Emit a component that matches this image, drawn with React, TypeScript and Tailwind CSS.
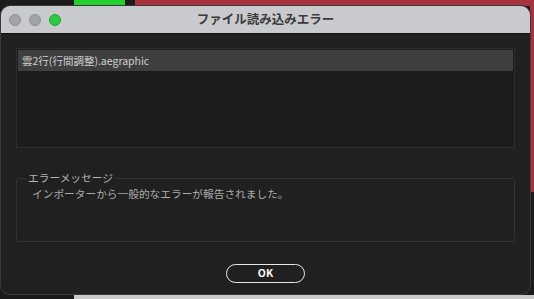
import React from "react";

const jp = { fontFamily: '"Noto Sans CJK JP", "Noto Sans", sans-serif' };

function TrafficLight({ color }: { color: string }) {
  return <span className={`block h-3 w-3 rounded-full border ${color}`} />;
}

export default function App() {
  return (
    <main className="relative h-[299px] w-[534px] overflow-hidden bg-[#1b1b1b]" style={jp}>
      {/* desktop behind the dialog */}
      <div className="absolute left-[74px] top-0 h-[6px] w-[51px] bg-[#22d12e]" />
      <div className="absolute left-[135px] top-0 h-[6px] w-[399px] bg-[#a8333c]" />
      <div className="absolute right-0 top-0 h-[192px] w-[4px] bg-[#a8333c]" />
      <div className="absolute bottom-0 left-[74px] h-[4px] w-[460px] bg-[#c9c9cb]" />

      <section className="relative mt-[5px] flex h-[290px] w-[531px] flex-col overflow-hidden rounded-[10px] border border-[#3a3a3a] bg-[#202020]">
        <header className="relative flex h-[28px] shrink-0 items-center border-b border-[#111] bg-[#c9cacd] px-[8px]">
          <div className="flex gap-[8px]">
            <TrafficLight color="bg-[#a4a4a8] border-[#8e8e92]" />
            <TrafficLight color="bg-[#a4a4a8] border-[#8e8e92]" />
            <TrafficLight color="bg-[#2bc840] border-[#1fa830]" />
          </div>
          <h1 className="absolute inset-x-0 text-center text-[12.5px] font-bold text-[#3b3b3b]">
            ファイル読み込みエラー
          </h1>
        </header>

        <div className="flex flex-1 flex-col px-[15px]">
          <div className="mt-[14px] h-[100px] border border-[#2e2e2e] bg-[#1c1c1c] p-px">
            <div className="flex h-[21px] items-center bg-[#3f3f3f] px-[4px] text-[10.5px] text-[#cfcfcf]">
              雲2行(行間調整).aegraphic
            </div>
          </div>

          <fieldset className="mt-[22px] h-[72px] rounded-[3px] border border-[#333] px-[15px]">
            <legend className="ml-[-6px] px-[2px] text-[10.7px] leading-[16px] text-[#b4b4b4]">
              エラーメッセージ
            </legend>
            <p className="text-[10.7px] leading-[16px] text-[#ababab]">
              インポーターから一般的なエラーが報告されました。
            </p>
          </fieldset>

          <div className="mt-[22px] flex justify-center">
            <button className="h-[19px] w-[79px] rounded-full border-[1.5px] border-[#e8e8e8] text-[10.5px] font-bold leading-none text-white">
              OK
            </button>
          </div>
        </div>
      </section>
    </main>
  );
}
